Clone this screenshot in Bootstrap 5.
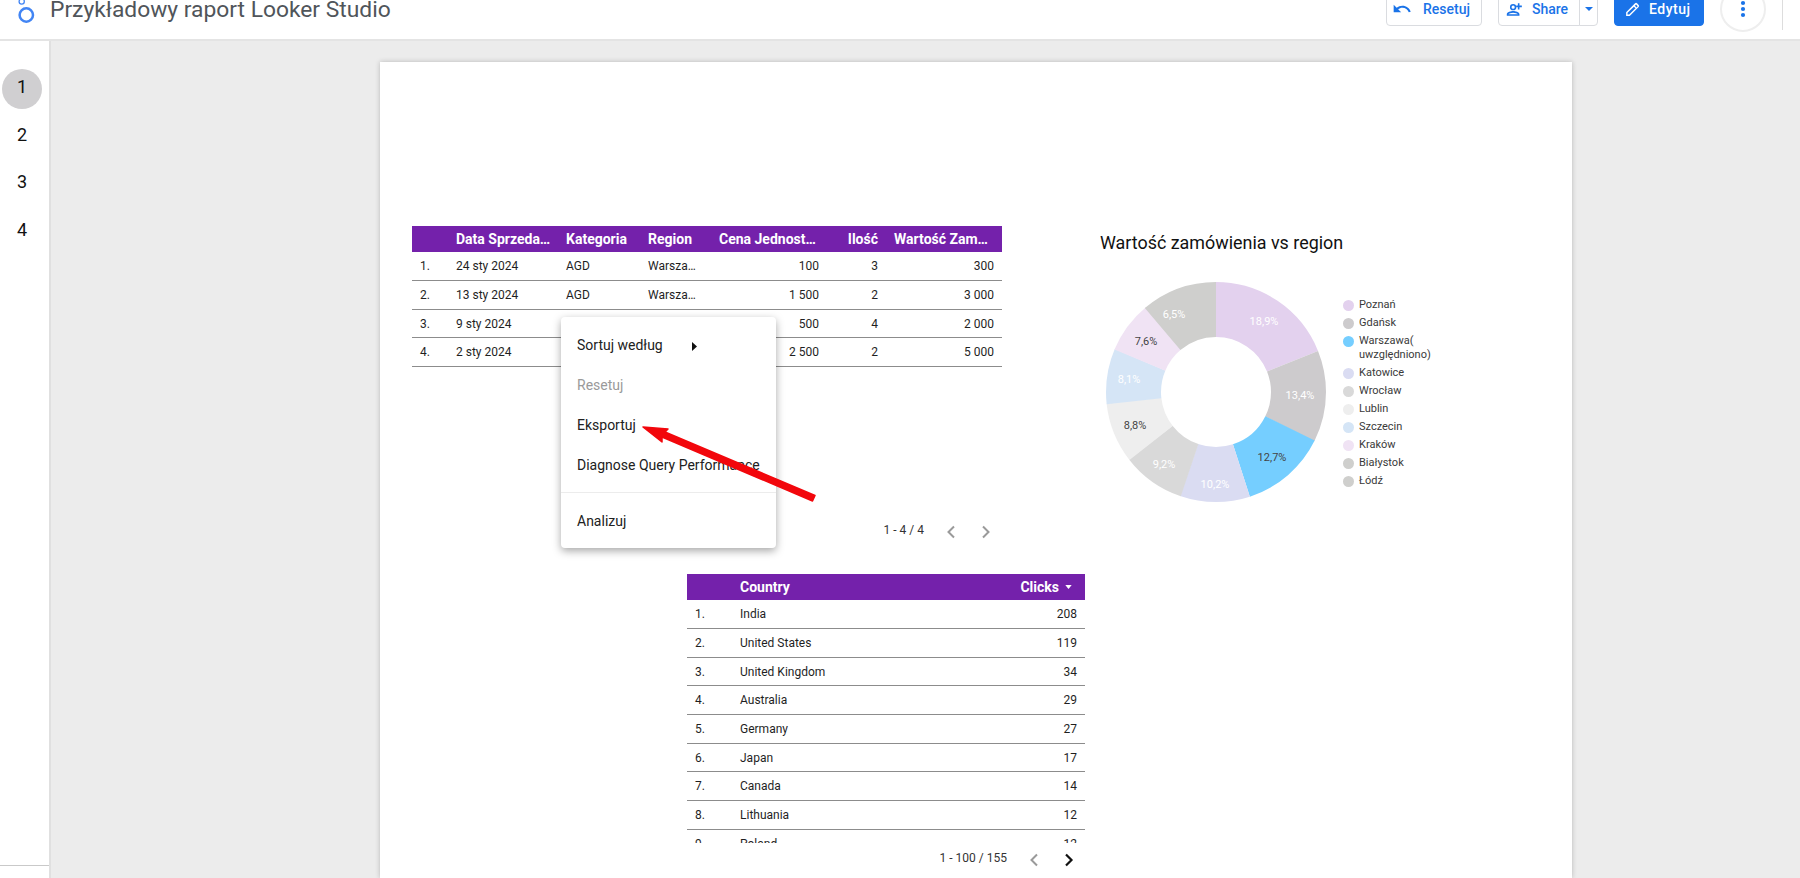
<!DOCTYPE html>
<html lang="pl">
<head>
<meta charset="utf-8">
<title>Przykładowy raport Looker Studio</title>
<link href="https://cdn.jsdelivr.net/npm/bootstrap@5.3.0/dist/css/bootstrap.min.css" rel="stylesheet">
<style>
html,body{height:878px;overflow:hidden}
body{font-family:Roboto,"Liberation Sans",sans-serif;background:#ececec;color:#1a1a1a}
.top-bar{height:41px;background:#fff;border-bottom:2px solid #e4e4e4;overflow:hidden}
.app-logo{width:22px;height:24px;margin:0 0 0 14px;flex:none}
.app-title{font-size:22.8px;line-height:20px;color:#50555a;margin:0 0 0 14px;font-weight:400}
.bar-actions{margin-top:-8px;gap:16px;padding-right:17px}
.bar-btn{height:34px;display:inline-flex;align-items:center;font-size:14px;font-weight:500;padding:0;background:#fff;color:#1a73e8;border:1px solid #dadce0;border-radius:4px}
.bar-btn:hover{background:#fff;color:#1a73e8;border-color:#dadce0}
.btn-reset{width:96px;padding-left:5px;gap:11px}
.btn-share{width:82px;padding-left:7px;gap:7px;border-radius:4px 0 0 4px}
.btn-caret{width:19px;justify-content:center;border-radius:0 4px 4px 0}
.btn-edit{width:90px;padding-left:9px;gap:8px;background:#1a73e8;color:#fff;border-color:#1a73e8;letter-spacing:.5px}
.btn-edit:hover{background:#1a73e8;color:#fff;border-color:#1a73e8}
.btn-more{width:46px;height:46px;margin-top:-6px;border-radius:50%;justify-content:center;border:2px solid #eee}
.bar-rule{width:1px;height:38px;background:#ddd}
.work-area{height:837px}
.page-rail{width:51px;flex:none;background:#fff;border-right:2px solid #e0e0e0;position:relative;padding:27px 0 0 1px}
.page-num{width:40px;height:40px;margin:0 0 7.5px 1px;border-radius:50%;font-size:18px;line-height:38px;text-align:center;color:#111}
.page-num.is-on{background:#d0cfd1;line-height:36px;transform:translateY(1px)}
.rail-line{position:absolute;left:0;right:0;bottom:12px;height:1px;background:#c9c9c9}
.report-sheet{width:1192px;margin:21px 0 0 329px;background:#fff;box-shadow:0 0 5px rgba(0,0,0,.22);position:relative;height:816px}
.upper-row{height:512px;padding:164px 0 0 32px}
.block-one{width:590px}
.data-grid{table-layout:fixed;width:100%;margin:0;border-collapse:collapse;font-size:12px;color:#1f1f1f}
.data-grid th{background:#7421ab;color:#fff;font-size:14px;font-weight:700;height:26px;padding:0 8px;border:0;white-space:nowrap;overflow:hidden;line-height:26px;vertical-align:middle}
.data-grid td{height:28.67px;padding:0 8px;border:0;border-bottom:1px solid #8c8c8c;white-space:nowrap;overflow:hidden;background:transparent;color:#1f1f1f;vertical-align:middle}
.data-grid th.pad-m{padding-right:12px}
.data-grid th.pad-l{padding-right:14px}
.w-a{width:36px}.w-b{width:110px}.w-c{width:82px}.w-d{width:71px}.w-e{width:116px}.w-f{width:59px}.w-g{width:116px}
.pager{height:20px;font-size:12px;line-height:20px;color:#333;gap:0;padding-right:6px}
.pager svg{width:20px;height:20px;flex:none}
.pager .prev-arrow{margin:2px 15px 0 17px}
.pager svg.next-arrow{margin-top:2px}
.block-one .pager{margin-top:153px}
.chart-block{margin-left:98px;width:340px}
.chart-title{font-size:17.9px;line-height:34px;font-weight:400;color:#111;margin:0 0 22px}
.donut{width:220px;height:220px;margin-left:6px;flex:none}
.donut text{font:11px Roboto,"Liberation Sans",sans-serif;text-anchor:middle;dominant-baseline:central}
.legend-list{margin:13.5px 0 0 17px;padding:0;list-style:none;font-size:11px;line-height:14px;color:#3a3a3a}
.legend-list li{display:flex;gap:5px;padding:2px 0}
.legend-dot{width:11px;height:11px;border-radius:50%;flex:none;margin-top:2px}
.c1{background:#e3d1ee}.c2{background:#cdcbcd}.c3{background:#75ceff}.c4{background:#dadcf2}.c5{background:#d9d9d9}.c6{background:#eee}.c7{background:#d5e5f6}.c8{background:#f0e3f4}.c9{background:#cfcfcd}.c10{background:#cfcfcd}
.block-two{width:398px;margin-left:307px}
.clip-box{height:269px;overflow:hidden}
.block-two .pager{margin-top:5px;padding-right:6px}
.col-x{width:45px}.col-y{width:auto}.col-z{width:110px}
.sort-mark{width:7px;height:4px;margin:0 0 2px 6px}
.data-grid th.th-clicks{padding-right:13px}
.ctx-menu{display:block;position:absolute;left:181px;top:255px;width:215px;height:231px;padding:8px 0 7px;margin:0;border:0;border-radius:4px;box-shadow:0 3px 8px rgba(0,0,0,.35);font-size:14px;min-width:0;background:#fff}
.ctx-menu .dropdown-item{height:40px;line-height:40px;padding:0 0 0 16px;color:#212121;white-space:nowrap}
.ctx-menu .dropdown-item.disabled{color:#9a9a9a}
.ctx-menu .dropdown-divider{margin:7px 0 8px;border-top:1px solid #ececec;opacity:1}
.tri-mark{width:5px;height:9px;margin-left:29px;vertical-align:-0.5px}
.red-arrow{position:absolute;left:256px;top:355px;width:190px;height:90px;pointer-events:none;z-index:1001}
</style>
</head>
<body>
<header class="top-bar d-flex align-items-start">
  <svg class="app-logo" viewBox="0 0 22 24" fill="none" stroke="#4285f4" stroke-width="2.500"><circle cx="12.300" cy="15" r="6.700"/><circle cx="7.700" cy="1.500" r="2.600" stroke-width="1.300"/></svg>
  <h1 class="app-title">Przykładowy raport Looker Studio</h1>
  <div class="bar-actions d-flex align-items-start ms-auto">
    <button type="button" class="btn bar-btn btn-reset"><svg width="20" height="20" viewBox="0 0 24 24" fill="#1a73e8"><path d="M12.500 8c-2.650 0-5.050 1-6.900 2.600L2 7v9h9l-3.620-3.620C8.770 11.200 10.540 10.500 12.500 10.500c3.540 0 6.550 2.310 7.600 5.500l2.370-.78C21.080 11.030 17.150 8 12.500 8z"/></svg>Resetuj</button>
    <div class="btn-group" role="group">
      <button type="button" class="btn bar-btn btn-share"><svg width="19" height="19" viewBox="0 0 24 24" fill="#1a73e8"><path d="M15 4v3h-2v2h2v3h2V9h3V7h-3V4h-2zM9 5a4 4 0 1 0 0 8 4 4 0 0 0 0-8zm0 2a2 2 0 1 1 0 4 2 2 0 0 1 0-4zm0 7c-2.700 0-8 1.300-8 4v2h16v-2c0-2.700-5.300-4-8-4zm0 2c2.600 0 5.400 1.200 6 2H3c.6-.8 3.400-2 6-2z"/></svg>Share</button>
      <button type="button" class="btn bar-btn btn-caret" aria-label="Share options"><svg width="8" height="4" viewBox="0 0 10 5" fill="#1a73e8"><path d="M0 0h10L5 5z"/></svg></button>
    </div>
    <button type="button" class="btn bar-btn btn-edit"><svg width="17" height="17" viewBox="0 0 24 24" fill="#fff"><path d="M20.700 5.600 18.400 3.300a2 2 0 0 0-2.800 0L3 15.900V21h5.100L20.700 8.400a2 2 0 0 0 0-2.800zM7.300 19H5v-2.300L14 8l2.300 2.300L7.300 19zM17.700 9 15.400 6.700l1.600-1.600 2.300 2.300L17.700 9z"/></svg>Edytuj</button>
    <button type="button" class="btn bar-btn btn-more" aria-label="Więcej"><svg width="6" height="18" viewBox="0 0 6 18" fill="#1a73e8"><circle cx="3" cy="3" r="2.100"/><circle cx="3" cy="9" r="2.100"/><circle cx="3" cy="15" r="2.100"/></svg></button>
    <div class="bar-rule"></div>
  </div>
</header>

<div class="work-area d-flex">
  <nav class="page-rail">
    <div class="page-num is-on">1</div>
    <div class="page-num">2</div>
    <div class="page-num">3</div>
    <div class="page-num">4</div>
    <div class="rail-line"></div>
  </nav>

  <main class="report-sheet">
    <div class="upper-row d-flex align-items-start">
      <section class="block-one">
        <table class="table data-grid">
          <colgroup><col class="w-a"><col class="w-b"><col class="w-c"><col class="w-d"><col class="w-e"><col class="w-f"><col class="w-g"></colgroup>
          <thead><tr><th></th><th>Data Sprzeda…</th><th>Kategoria</th><th>Region</th><th class="text-end pad-m">Cena Jednost…</th><th class="text-end">Ilość</th><th class="text-end pad-l">Wartość Zam…</th></tr></thead>
          <tbody>
            <tr><td>1.</td><td>24 sty 2024</td><td>AGD</td><td>Warsza…</td><td class="text-end">100</td><td class="text-end">3</td><td class="text-end">300</td></tr>
            <tr><td>2.</td><td>13 sty 2024</td><td>AGD</td><td>Warsza…</td><td class="text-end">1 500</td><td class="text-end">2</td><td class="text-end">3 000</td></tr>
            <tr><td>3.</td><td>9 sty 2024</td><td></td><td></td><td class="text-end">500</td><td class="text-end">4</td><td class="text-end">2 000</td></tr>
            <tr><td>4.</td><td>2 sty 2024</td><td></td><td></td><td class="text-end">2 500</td><td class="text-end">2</td><td class="text-end">5 000</td></tr>
          </tbody>
        </table>
        <div class="pager d-flex justify-content-end">
          <span>1 - 4 / 4</span>
          <svg class="prev-arrow" viewBox="0 0 20 20" fill="none" stroke="#9a9a9a" stroke-width="2"><path d="M13 4.500 7.500 10l5.500 5.500"/></svg>
          <svg class="next-arrow" viewBox="0 0 20 20" fill="none" stroke="#9a9a9a" stroke-width="2"><path d="M7 4.500 12.500 10 7 15.500"/></svg>
        </div>
      </section>

      <section class="chart-block">
        <h2 class="chart-title">Wartość zamówienia vs region</h2>
        <div class="d-flex align-items-start">
          <svg class="donut" viewBox="0 0 220 220" fill="none" stroke-width="55">
            <g transform="rotate(-90 110 110)">
              <circle cx="110" cy="110" r="82.500" pathLength="100" stroke="#e3d1ee" stroke-dasharray="18.900 100"/>
              <circle cx="110" cy="110" r="82.500" pathLength="100" stroke="#cdcbcd" stroke-dasharray="13.500 100" stroke-dashoffset="-18.900"/>
              <circle cx="110" cy="110" r="82.500" pathLength="100" stroke="#75ceff" stroke-dasharray="12.700 100" stroke-dashoffset="-32.300"/>
              <circle cx="110" cy="110" r="82.500" pathLength="100" stroke="#dadcf2" stroke-dasharray="10.300 100" stroke-dashoffset="-45"/>
              <circle cx="110" cy="110" r="82.500" pathLength="100" stroke="#d9d9d9" stroke-dasharray="9.300 100" stroke-dashoffset="-55.200"/>
              <circle cx="110" cy="110" r="82.500" pathLength="100" stroke="#eeeeee" stroke-dasharray="8.900 100" stroke-dashoffset="-64.400"/>
              <circle cx="110" cy="110" r="82.500" pathLength="100" stroke="#d5e5f6" stroke-dasharray="8.200 100" stroke-dashoffset="-73.200"/>
              <circle cx="110" cy="110" r="82.500" pathLength="100" stroke="#f0e3f4" stroke-dasharray="7.700 100" stroke-dashoffset="-81.300"/>
              <circle cx="110" cy="110" r="82.500" pathLength="100" stroke="#cfcfcd" stroke-dasharray="11.200 100" stroke-dashoffset="-88.800"/>
            </g>
            <g stroke="none" fill="#fff">
              <text x="158" y="39">18,9%</text>
              <text x="194" y="113">13,4%</text>
              <text x="166" y="175" fill="#444">12,7%</text>
              <text x="109" y="202">10,2%</text>
              <text x="58" y="182">9,2%</text>
              <text x="29" y="143" fill="#444">8,8%</text>
              <text x="23" y="97">8,1%</text>
              <text x="40" y="59" fill="#444">7,6%</text>
              <text x="68" y="32">6,5%</text>
            </g>
          </svg>
          <ul class="legend-list">
            <li><span class="legend-dot c1"></span><span>Poznań</span></li>
            <li><span class="legend-dot c2"></span><span>Gdańsk</span></li>
            <li><span class="legend-dot c3"></span><span>Warszawa(<br>uwzględniono)</span></li>
            <li><span class="legend-dot c4"></span><span>Katowice</span></li>
            <li><span class="legend-dot c5"></span><span>Wrocław</span></li>
            <li><span class="legend-dot c6"></span><span>Lublin</span></li>
            <li><span class="legend-dot c7"></span><span>Szczecin</span></li>
            <li><span class="legend-dot c8"></span><span>Kraków</span></li>
            <li><span class="legend-dot c9"></span><span>Białystok</span></li>
            <li><span class="legend-dot c10"></span><span>Łódź</span></li>
          </ul>
        </div>
      </section>
    </div>

    <section class="block-two">
      <div class="clip-box">
        <table class="table data-grid">
          <colgroup><col class="col-x"><col class="col-y"><col class="col-z"></colgroup>
          <thead><tr><th></th><th>Country</th><th class="text-end th-clicks">Clicks<svg class="sort-mark" viewBox="0 0 8 5" fill="#fff"><path d="M0 0h8L4 5z"/></svg></th></tr></thead>
          <tbody>
            <tr><td>1.</td><td>India</td><td class="text-end">208</td></tr>
            <tr><td>2.</td><td>United States</td><td class="text-end">119</td></tr>
            <tr><td>3.</td><td>United Kingdom</td><td class="text-end">34</td></tr>
            <tr><td>4.</td><td>Australia</td><td class="text-end">29</td></tr>
            <tr><td>5.</td><td>Germany</td><td class="text-end">27</td></tr>
            <tr><td>6.</td><td>Japan</td><td class="text-end">17</td></tr>
            <tr><td>7.</td><td>Canada</td><td class="text-end">14</td></tr>
            <tr><td>8.</td><td>Lithuania</td><td class="text-end">12</td></tr>
            <tr><td>9.</td><td>Poland</td><td class="text-end">12</td></tr>
          </tbody>
        </table>
      </div>
      <div class="pager d-flex justify-content-end">
        <span>1 - 100 / 155</span>
        <svg class="prev-arrow" viewBox="0 0 20 20" fill="none" stroke="#9a9a9a" stroke-width="2"><path d="M13 4.500 7.500 10l5.500 5.500"/></svg>
        <svg class="next-arrow" viewBox="0 0 20 20" fill="none" stroke="#111" stroke-width="2.200"><path d="M7 4.500 12.500 10 7 15.500"/></svg>
      </div>
    </section>

    <div class="dropdown-menu ctx-menu">
      <a class="dropdown-item" href="#">Sortuj według<svg class="tri-mark" viewBox="0 0 5 9" fill="#111"><path d="M0 0l5 4.500L0 9z"/></svg></a>
      <a class="dropdown-item disabled" href="#">Resetuj</a>
      <a class="dropdown-item" href="#">Eksportuj</a>
      <a class="dropdown-item" href="#">Diagnose Query Performance</a>
      <div class="dropdown-divider"></div>
      <a class="dropdown-item" href="#">Analizuj</a>
    </div>
    <svg class="red-arrow" viewBox="0 0 190 90"><path d="M7 10 32 12 29 15 179 78.500 176.500 84 26 20 26 25z" fill="#f2070c" stroke="#f2070c" stroke-width="1.500" stroke-linejoin="round"/></svg>
  </main>
</div>
<script src="https://cdn.jsdelivr.net/npm/bootstrap@5.3.0/dist/js/bootstrap.bundle.min.js"></script>
</body>
</html>
